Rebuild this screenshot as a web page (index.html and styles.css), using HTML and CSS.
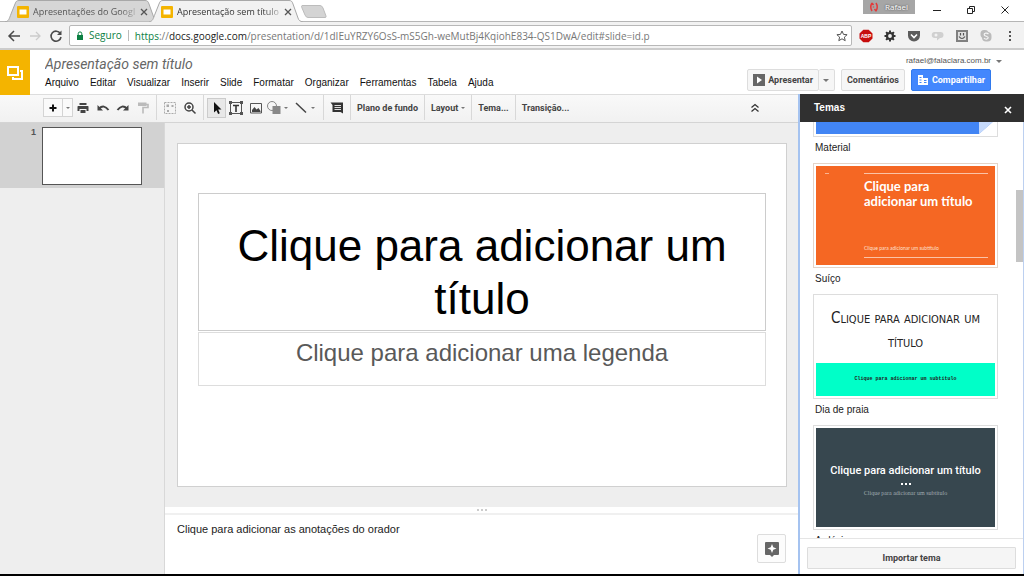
FILE: index.html
```html
<!DOCTYPE html>
<html lang="pt-BR">
<head>
<meta charset="utf-8">
<title>Apresentação sem título</title>
<link rel="stylesheet" href="styles.css">
</head>
<body>
<div class="tabstrip">
  <div class="tab">
    <svg class="tab-shape" viewBox="0 0 154 22" preserveAspectRatio="none"><path d="M0 22 C4 21 4 19 6 14 L10 4 C11 1 12 .5 14 .5 H140 C142 .5 143 1 144 4 L149 18 C150 21 151 21 154 22Z" fill="#d6d6d6" stroke="#a8a8a8"/></svg>
    <svg class="fav" viewBox="0 0 12 12"><rect width="12" height="12" rx="1" fill="#f4b400"/><path d="M2.500 3.500h7v5h-7z" fill="#fff"/></svg>
    <span class="tab-title">Apresentações do Googl</span>
    <button class="tab-close" aria-label="Fechar guia"><svg viewBox="0 0 8 8"><path d="M1 1l6 6M7 1L1 7"/></svg></button>
  </div>
  <div class="tab active">
    <svg class="tab-shape" viewBox="0 0 154 22" preserveAspectRatio="none"><path d="M0 22 C4 21 4 19 6 14 L10 4 C11 1 12 .5 14 .5 H140 C142 .5 143 1 144 4 L149 18 C150 21 151 21 154 22" fill="#f2f2f2" stroke="#a8a8a8"/></svg>
    <svg class="fav" viewBox="0 0 12 12"><rect width="12" height="12" rx="1" fill="#f4b400"/><path d="M2.500 3.500h7v5h-7z" fill="#fff"/></svg>
    <span class="tab-title">Apresentação sem título</span>
    <button class="tab-close" aria-label="Fechar guia"><svg viewBox="0 0 8 8"><path d="M1 1l6 6M7 1L1 7"/></svg></button>
  </div>
  <button class="newtab" aria-label="Nova guia"><svg viewBox="0 0 26 13"><path d="M1 .5H19Q21 .5 22 3L25 11Q25.500 12.500 24 12.500H7Q5 12.500 4 10L1 3Q0 .5 1 .5Z" fill="#d4d4d4" stroke="#bcbcbc"/></svg></button>
  <div class="window-controls">
    <span class="profile"><svg viewBox="0 0 10 10"><path d="M3 1Q.5 5 3 9M7 1Q9.500 5 7 9M3 1l1.500 2M7 9L5.500 7M4.500 4.500v1" fill="none" stroke="#e33b3b" stroke-width="1.500"/></svg>Rafael</span>
    <button aria-label="Minimizar"><svg viewBox="0 0 10 10"><path d="M1 5.500h8"/></svg></button>
    <button aria-label="Restaurar"><svg viewBox="0 0 10 10"><path d="M1.500 3.500h5v5h-5zM3.500 3V1.500h5v5H7"/></svg></button>
    <button aria-label="Fechar"><svg viewBox="0 0 10 10"><path d="M1.500 1.500l7 7M8.500 1.500l-7 7"/></svg></button>
  </div>
</div>

<div class="navbar">
  <button aria-label="Voltar"><svg viewBox="0 0 14 14"><path d="M13 7H2M7 2L2 7l5 5" fill="none" stroke="#4a4a4a" stroke-width="1.500"/></svg></button>
  <button aria-label="Avançar"><svg viewBox="0 0 14 14"><path d="M2 7h10M8 3l4 4-4 4" fill="none" stroke="#ccc" stroke-width="1.300"/></svg></button>
  <button aria-label="Recarregar"><svg viewBox="0 0 14 14"><path d="M11.300 4.500A5 5 0 1 0 12 8" fill="none" stroke="#4a4a4a" stroke-width="1.600"/><path d="M12.500 1.500V6H8z" fill="#4a4a4a"/></svg></button>
  <div class="omnibox">
    <svg class="lock" viewBox="0 0 8 10"><path d="M1 4h6v5H1z" fill="#0b8043"/><path d="M2.200 4V2.700a1.800 1.800 0 0 1 3.600 0V4" fill="none" stroke="#0b8043"/></svg>
    <span class="secure">Seguro</span>
    <div class="url" role="textbox" aria-label="Endereço"><span class="scheme">https</span>://<span class="host">docs.google.com</span>/presentation/d/1dIEuYRZY6OsS-mS5Gh-weMutBj4KqiohE834-QS1DwA/edit#slide=id.p</div>
    <button class="star" aria-label="Favorito"><svg viewBox="0 0 12 12"><path d="M6 1l1.500 3.400 3.600.3-2.700 2.400.8 3.600L6 8.800l-3.200 1.900.8-3.600L.9 4.700l3.600-.3z" fill="none" stroke="#555"/></svg></button>
  </div>
  <div class="extensions">
    <button aria-label="ABP"><svg viewBox="0 0 14 14"><path d="M4.300.7h5.400l3.800 3.800v5l-3.800 3.800H4.300L.5 9.500v-5z" fill="#c70d0d"/><text x="7" y="9" text-anchor="middle" class="abp">ABP</text></svg></button>
    <button aria-label="Ajustes"><svg viewBox="0 0 14 14"><circle cx="7" cy="7" r="3" fill="none" stroke="#333" stroke-width="2.200"/><path d="M7 1.500v2M7 10.500v2M1.500 7h2M10.500 7h2M3.100 3.100l1.400 1.400M9.500 9.500l1.400 1.400M3.100 10.900l1.400-1.400M9.500 4.500l1.400-1.400" stroke="#333" stroke-width="2"/></svg></button>
    <button aria-label="Pocket"><svg viewBox="0 0 14 14"><path d="M1 2h12v4.500a6 6 0 0 1-12 0z" fill="#5c5c5c"/><path d="M4 5.500l3 3 3-3" fill="none" stroke="#fff" stroke-width="1.600"/></svg></button>
    <button aria-label="Mensagens"><svg viewBox="0 0 14 14"><path d="M3.500 3h6a3 3 0 0 1 0 6H9l-3 2.500V9H4a3 3 0 0 1-.5-6z" fill="#d0d0d0"/><circle cx="5" cy="6" r="1.500" fill="#f2f2f2"/></svg></button>
    <button aria-label="Extensão"><svg viewBox="0 0 14 14"><path d="M1 1h12v12H1z" fill="#808080"/><path d="M3 3h8v8H3z" fill="#e0e0e0"/><path d="M5.500 4v2.500M8.500 4v2.500M4 7.500q3 4 6 0" fill="none" stroke="#555" stroke-width="1.200"/></svg></button>
    <button aria-label="Skype"><svg viewBox="0 0 14 14"><rect x="1.500" y="1" width="8" height="8" rx="3.500" fill="#bbb"/><rect x="3" y="3" width="9.500" height="9.500" rx="4" fill="#bbb"/><path d="M9.500 5C8 3.500 5 4 5.200 5.800 5.500 7.500 9.300 7 9.200 8.800 9 10.500 6 10.500 5 9" fill="none" stroke="#f6f6f6" stroke-width="1.200"/></svg></button>
    <button aria-label="Menu"><svg viewBox="0 0 14 14"><path d="M6 2h2v2H6zM6 6h2v2H6zM6 10h2v2H6z" fill="#555"/></svg></button>
  </div>
</div>

<header class="docs-header">
  <a class="logo" href="#" aria-label="Apresentações"><svg viewBox="0 0 18 18"><path d="M2 3h10v8H2zM14 7h2v8H7v-2" fill="none" stroke="#fff" stroke-width="2"/></svg></a>
  <div class="doc-info">
    <input class="doc-title" type="text" value="Apresentação sem título" aria-label="Título">
    <nav class="menus">
      <button>Arquivo</button><button>Editar</button><button>Visualizar</button><button>Inserir</button><button>Slide</button><button>Formatar</button><button>Organizar</button><button>Ferramentas</button><button>Tabela</button><button>Ajuda</button>
    </nav>
  </div>
  <div class="account">
    <button class="email">rafael@falaclara.com.br<i class="caret"></i></button>
    <div class="actions">
      <div class="split"><button class="btn"><svg viewBox="0 0 12 12"><path d="M0 0h12v12H0z" fill="#666"/><path d="M4 2.500l5 3.500-5 3.500z" fill="#fff"/></svg>Apresentar</button><button class="btn drop" aria-label="Opções"><i class="caret"></i></button></div>
      <button class="btn">Comentários</button>
      <button class="btn primary"><svg viewBox="0 0 12 12"><path d="M1 1h5v3h5v7H1z" fill="#fff"/><path d="M2.500 3.500h2M2.500 6h2M2.500 8.500h2M7 6.500h2.500M7 8.500h2.500" stroke="#4285f4"/></svg>Compartilhar</button>
    </div>
  </div>
</header>

<div class="app">
  <div class="editor">
    <div class="toolbar">
      <div class="new-slide"><button aria-label="Novo slide"><svg viewBox="0 0 16 16"><path d="M8 4.500v7M4.500 8h7" stroke="#111" stroke-width="2"/></svg></button><button class="narrow" aria-label="Layouts"><i class="caret"></i></button></div>
      <button class="tool" aria-label="Imprimir"><svg viewBox="0 0 16 16"><path d="M4.500 3h7v2h-7zM3 6h10q.5 0 .5 1v4h-2V9h-7v2h-2V7q0-1 .5-1zM5.500 10h5v3h-5z" fill="#444"/></svg></button>
      <button class="tool" aria-label="Desfazer"><svg viewBox="0 0 16 16"><path d="M4 8.500Q9 4 13.500 10" fill="none" stroke="#444" stroke-width="2"/><path d="M2.500 5v5.500H8z" fill="#444"/></svg></button>
      <button class="tool" aria-label="Refazer"><svg viewBox="0 0 16 16"><path d="M12 8.500Q7 4 2.500 10" fill="none" stroke="#444" stroke-width="2"/><path d="M13.500 5v5.500H8z" fill="#444"/></svg></button>
      <button class="tool" aria-label="Pintar formatação"><svg viewBox="0 0 16 16"><path d="M3 2.500h8.500v3.500H3z" fill="#bbb"/><path d="M11 4.500h2v3H8V13.500" fill="none" stroke="#bbb" stroke-width="1.600"/></svg></button>
      <span class="sep"></span>
      <button class="tool" aria-label="Ajustar"><svg viewBox="0 0 16 16"><path d="M2.500 2.500h11v11h-11z" fill="#f5f5f5" stroke="#aaa" stroke-dasharray="2 1"/><path d="M4.500 4.500h2.500v2.500H4.500zM9.500 5h2v2h-2zM5 10h2v2H5z" fill="#aaa"/></svg></button>
      <button class="tool" aria-label="Zoom"><svg viewBox="0 0 16 16"><circle cx="7" cy="7" r="4" fill="none" stroke="#444" stroke-width="1.500"/><path d="M10 10l3.500 3.500M7 5v4M5 7h4" stroke="#444" stroke-width="1.500"/></svg></button>
      <span class="sep"></span>
      <button class="tool selected" aria-label="Selecionar"><svg viewBox="0 0 16 16"><path d="M5 2v10.500l2.500-2.200 1.600 3.700 1.700-.8L9.200 9.600H12.500z" fill="#111"/></svg></button>
      <button class="tool" aria-label="Caixa de texto"><svg viewBox="0 0 16 16"><path d="M2.500 2.500h11v11h-11z" fill="none" stroke="#555"/><path d="M1 1h3v3H1zM12 1h3v3h-3zM1 12h3v3H1zM12 12h3v3h-3z" fill="#555"/><path d="M5 5.500h6M8 5.500V12" stroke="#333" stroke-width="1.600"/></svg></button>
      <button class="tool" aria-label="Imagem"><svg viewBox="0 0 16 16"><path d="M2.500 3.500h11v9.500h-11z" fill="none" stroke="#555"/><path d="M4 12V10l2.500-3 2 2.500L10.500 8 12.500 11v1z" fill="#444"/></svg></button>
      <button class="tool wide" aria-label="Forma"><svg viewBox="0 0 16 16"><path d="M6.500 6h8v8h-8z" fill="#888"/><circle cx="6" cy="6" r="4.500" fill="none" stroke="#888"/></svg><i class="caret"></i></button>
      <button class="tool wide" aria-label="Linha"><svg viewBox="0 0 16 16"><path d="M3 3l10 9.500" stroke="#444" stroke-width="1.500"/></svg><i class="caret"></i></button>
      <span class="sep"></span>
      <button class="tool" aria-label="Comentário"><svg viewBox="0 0 16 16"><path d="M1.500 2.500h12.500v11L11.500 12H3.500V5z" fill="#333"/><path d="M5.500 5.500h6.500M5.500 7.500h6.500M5.500 9.500h6.500" stroke="#ddd"/></svg></button>
      <span class="sep"></span>
      <button class="text-tool">Plano de fundo</button>
      <span class="sep"></span>
      <button class="text-tool">Layout<i class="caret"></i></button>
      <span class="sep"></span>
      <button class="text-tool">Tema...</button>
      <span class="sep"></span>
      <button class="text-tool">Transição...</button>
      <button class="tool collapse" aria-label="Ocultar menus"><svg viewBox="0 0 16 16"><path d="M4.500 7.500L8 4.500l3.500 3M4.500 11.500L8 8.500l3.500 3" fill="none" stroke="#333" stroke-width="1.300"/></svg></button>
    </div>
    <div class="body">
      <aside class="filmstrip">
        <div class="film-item"><span class="num">1</span><div class="thumb"></div></div>
      </aside>
      <main class="workspace">
        <div class="canvas">
          <div class="slide">
            <div class="title-box">Clique para adicionar um título</div>
            <div class="subtitle-box">Clique para adicionar uma legenda</div>
          </div>
        </div>
        <div class="splitter"><i></i><i></i><i></i></div>
        <div class="notes">
          <textarea aria-label="Anotações">Clique para adicionar as anotações do orador</textarea>
          <button class="explore" aria-label="Explorar"><svg viewBox="0 0 16 16"><path d="M2 1h12q1 0 1 1v11q0 1-1 1h-4l-2 2-2-2H2q-1 0-1-1V2q0-1 1-1z" fill="#666"/><path d="M8 3l1.300 3.200L12.500 7.500 9.300 8.800 8 12 6.700 8.800 3.500 7.500l3.200-1.300z" fill="#fff"/></svg></button>
        </div>
      </main>
    </div>
  </div>
  <aside class="themes">
    <div class="themes-head"><h2>Temas</h2><button aria-label="Fechar"><svg viewBox="0 0 8 8"><path d="M1 1l6 6M7 1L1 7" stroke="#fff" stroke-width="1.600"/></svg></button></div>
    <div class="themes-body">
      <div class="theme-list">
        <figure><div class="card material"><svg viewBox="0 0 16 14"><path d="M0 14V0h16z" fill="#c6dafc"/><path d="M0 14L16 0v14z" fill="#fff"/></svg></div><figcaption>Material</figcaption></figure>
        <figure><div class="card swiss"><i class="dash"></i><div class="swiss-main"><strong>Clique para adicionar um título</strong><small>Clique para adicionar um subtítulo</small></div></div><figcaption>Suíço</figcaption></figure>
        <figure><div class="card beach"><strong>Clique para adicionar um título</strong><small>Clique para adicionar um subtítulo</small></div><figcaption>Dia de praia</figcaption></figure>
        <figure><div class="card slate"><strong>Clique para adicionar um título</strong><span class="dots"><i></i><i></i><i></i></span><small>Clique para adicionar um subtítulo</small></div><figcaption>Ardósia</figcaption></figure>
      </div>
      <div class="thumb-scroll"></div>
    </div>
    <div class="themes-foot"><button>Importar tema</button></div>
  </aside>
</div>
<div class="taskbar"></div>
</body>
</html>
```
FILE: styles.css
```css
* { box-sizing: border-box; }
html, body { height: 100%; }
body { margin: 0; display: flex; flex-direction: column; overflow: hidden; background: #fff; color: #222; font: 10px/14px "Liberation Sans", Arial, sans-serif; }
button { margin: 0; padding: 0; border: 0; background: none; color: inherit; font: inherit; display: flex; align-items: center; justify-content: center; flex: none; }
svg { display: block; flex: none; }
.caret { flex: none; width: 0; height: 0; border: 3px solid transparent; border-top-color: #777; border-bottom: 0; }

.tabstrip { display: flex; height: 22px; flex: none; padding: 0 2px 0 5px; border-bottom: 1px solid #b5b5b5; font: 9px/14px "Open Sans", "Noto Sans", sans-serif; }
.tab { position: relative; display: flex; align-items: center; gap: 4px; width: 154px; height: 22px; padding: 1px 12px 0 12px; margin-right: -10px; color: #555; }
.tab.active { z-index: 1; color: #333; }
.tab-shape { position: absolute; inset: 0; width: 100%; height: 100%; }
.tab .fav { position: relative; width: 12px; height: 12px; }
.tab-title { position: relative; flex: 1; white-space: nowrap; mask-image: linear-gradient(90deg, #000 85%, rgba(0, 0, 0, .3)); }
.tab-close { position: relative; width: 10px; }
.tab-close svg { width: 8px; height: 8px; stroke: #555; stroke-width: 1.3; }
.newtab { margin: 0 0 0 8px; padding-top: 2px; }
.newtab svg { width: 26px; height: 13px; }
.window-controls { display: flex; margin-left: auto; }
.window-controls button { width: 34px; height: 20px; }
.window-controls svg { width: 10px; height: 10px; fill: none; stroke: #222; }
.profile { display: flex; align-items: center; gap: 6px; width: 52px; height: 14px; padding-left: 6px; margin-right: 5px; background: #a6a6a6; color: #fff; font: 8px/14px "Open Sans", sans-serif; text-shadow: 0 0 2px #333; }

.navbar { display: flex; align-items: center; flex: none; height: 28px; padding: 2px 0 1px 3px; background: #f2f2f2; border-bottom: 2px solid #ccc; }
.navbar > button { width: 21px; }
.navbar button svg { width: 14px; height: 14px; }
.omnibox { flex: 1; min-width: 0; display: flex; align-items: center; height: 21px; margin-left: 3px; padding: 0 3px 0 6px; background: #fff; border: 1px solid #b8b8b8; border-radius: 2px; font: 10px/14px "Open Sans", "Noto Sans", sans-serif; }
.lock { width: 8px; height: 10px; }
.secure { margin-left: 5px; padding-right: 6px; border-right: 1px solid #bbb; line-height: 11px; color: #0b8043; }
.url { flex: 1; min-width: 0; overflow: hidden; white-space: nowrap; padding-left: 6px; color: #777; }
.scheme { color: #0b8043; }
.host { color: #222; }
.omnibox .star svg { width: 12px; height: 12px; }
.extensions { display: flex; gap: 10px; padding: 0 7px; }
.abp { font: bold 5px "Liberation Sans", sans-serif; fill: #fff; }

.docs-header { display: flex; flex: none; height: 44px; }
.logo { display: flex; align-items: center; justify-content: center; width: 30px; height: 45px; background: #f4b400; z-index: 1; }
.logo svg { width: 18px; height: 18px; }
.doc-info { flex: 1; padding: 5px 0 0 15px; }
.doc-title { display: block; width: 300px; height: 18px; padding: 0; border: 0; outline: 0; background: none; color: #666; font: italic 14px/18px Roboto, Arial, sans-serif; }
.menus { display: flex; gap: 11px; padding-top: 3px; color: #111; }
.account { display: flex; flex-direction: column; align-items: flex-end; padding-right: 33px; }
.email { gap: 5px; margin-right: -11px; padding-top: 4px; color: #555; font-size: 8px; }
.actions { display: flex; gap: 6px; padding-top: 1px; }
.split { display: flex; }
.btn { gap: 3px; height: 22px; padding: 0 5px; border: 1px solid #ddd; border-radius: 2px; background: #f6f6f6; color: #444; font: bold 9px/14px Roboto, "Liberation Sans", sans-serif; }
.btn svg { width: 12px; height: 12px; }
.btn.drop { width: 16px; border-left: 0; padding: 0; }
.btn.primary { background: #4387fd; border-color: #3079ed; color: #fff; }

.app { flex: 1; display: flex; min-height: 0; }
.editor { flex: 1; min-width: 0; display: flex; flex-direction: column; }
.toolbar { display: flex; align-items: center; flex: none; height: 29px; padding: 0 33px 2px 43px; background: linear-gradient(#f9f9f9, #f1f1f1); border-top: 1px solid #ddd; border-bottom: 1px solid #d4d4d4; }
.new-slide { display: flex; height: 19px; border: 1px solid #d4d4d4; background: #fafafa; }
.new-slide button { width: 18px; }
.new-slide .narrow { width: 10px; border-left: 1px solid #d4d4d4; }
.toolbar .caret { border-width: 2px; border-bottom: 0; }
.tool { width: 20px; height: 20px; }
.toolbar svg { width: 16px; height: 16px; }
.tool.selected { width: 19px; border: 1px solid #ccc; background: #e8e8e8; }
.tool.wide { width: 27px; gap: 2px; justify-content: flex-start; }
.sep { flex: none; width: 1px; height: 25px; margin: 0 3px; background: #d8d8d8; }
.text-tool { gap: 3px; padding: 0 3px; color: #444; font: bold 9px/14px Roboto, "Liberation Sans", sans-serif; }
.collapse { margin-left: auto; }
.body { flex: 1; display: flex; min-height: 0; }
.filmstrip { flex: none; width: 165px; background: #eee; border-right: 1px solid #d8d8d8; }
.film-item { display: flex; height: 65px; padding: 4px 0 0 31px; background: #d2d2d2; }
.num { width: 11px; line-height: 10px; color: #555; font-weight: bold; font-size: 9px; }
.thumb { width: 100px; height: 58px; background: #fff; border: 1px solid #555; }
.workspace { flex: 1; min-width: 0; display: flex; flex-direction: column; background: #eee; }
.canvas { flex: 1; display: flex; padding: 20px 11px 20px 12px; }
.slide { flex: 1; padding: 49px 20px 0; background: #fff; border: 1px solid #d0d0d0; text-align: center; }
.title-box { padding: 25px 30px 5px; border: 1px solid #ccc; color: #000; font-size: 44px; line-height: 53px; }
.subtitle-box { height: 54px; margin-top: 1px; padding-top: 5px; border: 1px solid #ddd; color: #595959; font-size: 24px; line-height: 30px; }
.splitter { display: flex; align-items: center; justify-content: center; gap: 2px; height: 8px; flex: none; background: #fff; border-bottom: 2px solid #f0f0f0; }
.splitter i { width: 2px; height: 2px; background: #ccc; }
.notes { display: flex; flex: none; height: 59px; padding: 7px 12px 0; background: #fff; }
.notes textarea { flex: 1; height: 40px; padding: 0; border: 0; outline: 0; resize: none; color: #222; font: 11px/14px "Liberation Sans", Arial, sans-serif; }
.explore { width: 29px; height: 29px; margin-top: 12px; border: 1px solid #ddd; border-radius: 2px; background: #fcfcfc; }
.explore svg { width: 16px; height: 16px; }

.themes { flex: none; width: 226px; display: flex; flex-direction: column; border-left: 2px solid #a5c3f0; border-right: 1px solid #bcd0f0; background: #fff; }
.themes-head { display: flex; align-items: center; justify-content: space-between; flex: none; height: 28px; padding: 0 12px 0 14px; margin-right: -1px; background: #303030; color: #fff; }
.themes-head h2 { margin: 0; font: bold 10px/14px "Liberation Sans", sans-serif; }
.themes-head svg { width: 8px; height: 8px; }
.themes-head button { padding-top: 4px; }
.themes-body { position: relative; flex: 1; min-height: 0; overflow: hidden; }
.theme-list { margin-top: -90px; padding: 0 25px 0 13px; }
.theme-list figure { margin: 0; }
.theme-list figcaption { height: 26px; padding: 4px 0 0 2px; line-height: 14px; color: #222; }
.card { height: 105px; border: 1px solid #ddd; padding: 2px; background: #fff; background-clip: content-box; }
.material { display: flex; align-items: flex-end; justify-content: flex-end; background-color: #4285f4; }
.material svg { width: 16px; height: 14px; }
.swiss { display: flex; background-color: #f56723; border-color: #e5d4c8; color: #fff; }
.dash { width: 4px; height: 1px; margin: 7px 0 0 9px; background: #fbb491; }
.swiss-main { flex: 1; display: flex; flex-direction: column; justify-content: space-between; margin: 7px 7px 7px 35px; padding: 5px 0 5px; border: solid #fbc3a7; border-width: 1px 0; }
.swiss strong { padding-right: 10px; font: bold 13px/15px Lato, sans-serif; }
.card small { font-size: 5px; line-height: 7px; }
.swiss small { font-family: Lato, sans-serif; color: #fde0d0; }
.beach { display: flex; flex-direction: column; text-align: center; }
.beach strong { flex: 1; padding: 9px 12px 0; color: #222; font: 15px/24px "DejaVu Sans Condensed", "DejaVu Sans", sans-serif; font-variant: small-caps; }
.beach small { height: 33px; padding-top: 13px; background: #00ffc8; color: #222; font: bold 5px/7px "Liberation Mono", monospace; }
.slate { display: flex; flex-direction: column; align-items: center; justify-content: center; background-color: #37474f; color: #fff; text-align: center; }
.slate strong { padding-top: 4px; white-space: nowrap; font: 500 11px/18px Roboto, sans-serif; }
.dots { display: flex; gap: 2px; padding: 3px 0; }
.dots i { width: 2px; height: 2px; background: #fff; }
.slate small { margin-top: 2px; color: #a0abb0; font-size: 6px; font-family: "Liberation Serif", serif; }
.thumb-scroll { position: absolute; top: 68px; right: 0; width: 7px; height: 72px; background: #c4c4c4; }
.themes-foot { flex: none; height: 36px; padding: 8px 7px 0; border-top: 1px solid #e5e5e5; }
.themes-foot button { width: 100%; height: 22px; border: 1px solid #ddd; border-radius: 1px; background: #f5f5f5; color: #444; font: bold 9px/14px Roboto, sans-serif; }
.taskbar { flex: none; height: 2px; background: #000; }
```
